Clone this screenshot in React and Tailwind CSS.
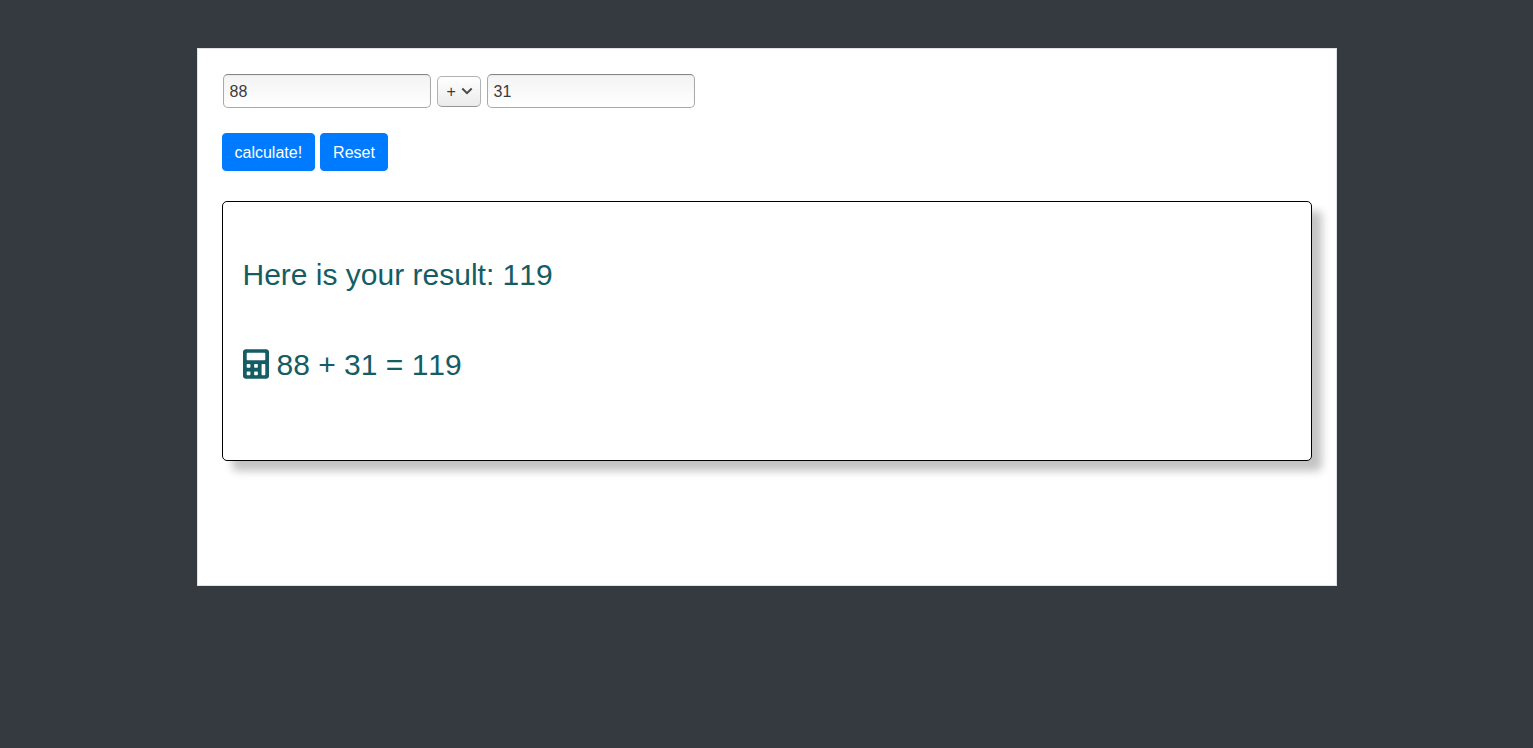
import { useState } from "react";
import { FaCalculator } from "react-icons/fa";

const operations = {
  "+": (a, b) => a + b,
  "-": (a, b) => a - b,
  "*": (a, b) => a * b,
  "/": (a, b) => a / b,
};

const fieldClass =
  "h-[34px] w-52 rounded-[5px] border border-[#a9a9a9] border-t-[#858585] bg-linear-to-b from-[#f3f3f3] to-white px-1.5 pt-0.5 text-base text-[#3b3b3b] shadow-[inset_0_1px_1px_#ececec] outline-none";

const buttonClass =
  "h-[38px] cursor-pointer rounded-sm border border-[#007bff] bg-[#007bff] px-3 pt-0.5 text-base text-white hover:bg-[#0069d9]";

export default function App() {
  const [first, setFirst] = useState("88");
  const [operator, setOperator] = useState("+");
  const [second, setSecond] = useState("31");
  const [result, setResult] = useState({ a: "88", op: "+", b: "31", value: 119 });

  const calculate = (event) => {
    event.preventDefault();
    const value = operations[operator](Number(first), Number(second));
    setResult({ a: first, op: operator, b: second, value });
  };

  const reset = () => {
    setFirst("");
    setSecond("");
    setOperator("+");
    setResult(null);
  };

  return (
    <div className="min-h-screen bg-[#343a40] py-12 font-['Liberation_Sans',Arial,sans-serif] [font-kerning:none]">
      <main className="mx-auto max-w-[1140px] border border-[#dee2e6] bg-white px-6 pt-[25px] pb-[124px]">
        <form onSubmit={calculate}>
          <div className="flex flex-wrap items-center gap-1.5 pl-px">
            <input
              aria-label="First number"
              className={fieldClass}
              value={first}
              onChange={(event) => setFirst(event.target.value)}
            />
            <div className="relative">
              <select
                aria-label="Operation"
                className="block h-[31px] w-11 appearance-none rounded-[5px] border border-[#b2b2b2] border-b-[#969696] bg-linear-to-b from-white to-[#ebebeb] pt-px pl-[9px] text-base text-[#3b3b3b] outline-none"
                value={operator}
                onChange={(event) => setOperator(event.target.value)}
              >
                {Object.keys(operations).map((symbol) => (
                  <option key={symbol}>{symbol}</option>
                ))}
              </select>
              <svg
                aria-hidden="true"
                className="pointer-events-none absolute top-2.5 right-2 h-2.5 w-3"
                viewBox="0 0 12 10"
                fill="none"
                stroke="#4a4a4a"
                strokeWidth="2"
              >
                <path d="M1.3 2.5 6 7.2 10.7 2.5" />
              </svg>
            </div>
            <input
              aria-label="Second number"
              className={fieldClass}
              value={second}
              onChange={(event) => setSecond(event.target.value)}
            />
          </div>
          <div className="mt-[25px] flex gap-[5px]">
            <button type="submit" className={buttonClass}>
              calculate!
            </button>
            <button type="button" className={buttonClass} onClick={reset}>
              Reset
            </button>
          </div>
        </form>
        <section
          aria-live="polite"
          className="mt-[30px] min-h-[260px] rounded-[5px] border border-black bg-white px-5 py-[50px] text-[30px] leading-[45px] text-[#145d64] shadow-[10px_10px_8px_#c4c4c4]"
        >
          {result && (
            <>
              <p>Here is your result: {result.value}</p>
              <p className="mt-[45px] flex items-center gap-2">
                <FaCalculator aria-hidden="true" className="mb-0.5 h-[30px] w-[26px]" />
                <span>
                  {result.a} {result.op} {result.b} = {result.value}
                </span>
              </p>
            </>
          )}
        </section>
      </main>
    </div>
  );
}
